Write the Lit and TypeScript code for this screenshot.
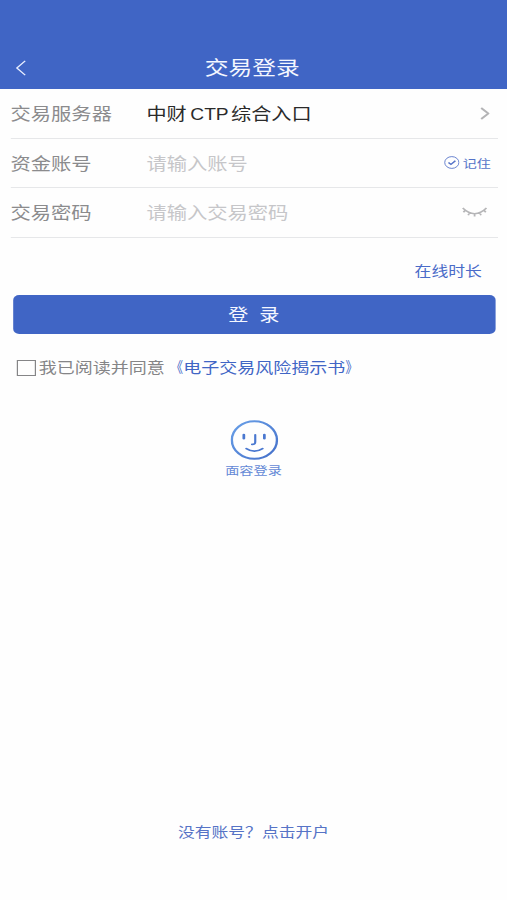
import { LitElement, html, css, svg, nothing } from "lit";
import { customElement } from "lit/decorators.js";

const chevron = svg`<path d="M1 1 L7 6.5 L1 12" fill="none" stroke="#b4b4b6" stroke-width="1.7"/>`;

@customElement("app-root")
export class AppRoot extends LitElement {
  static styles = css`
    :host {
      display: block;
      width: 507px;
      height: 900px;
      overflow: hidden;
      background: #fefefe;
      font-family: "Noto Sans CJK SC", sans-serif;
    }
    svg {
      display: block;
      flex: none;
    }
    .page {
      width: 422.5px;
      height: 900px;
      display: flex;
      flex-direction: column;
      transform: scaleX(1.2);
      transform-origin: 0 0;
    }
    .header {
      height: 89px;
      box-sizing: border-box;
      padding: 46px 13px 0;
      background: #4065c5;
      color: #f4f7ff;
      display: grid;
      grid-template-columns: 20px 1fr 20px;
      align-items: center;
    }
    .title {
      text-align: center;
      font-size: 19.8px;
      line-height: 42px;
      padding: 0 2px 1px 0;
    }
    .form {
      margin: 0 7.5px 0 8.8px;
    }
    .row {
      height: 49.6px;
      box-sizing: border-box;
      border-bottom: 1.5px solid #e6e7e9;
      display: flex;
      align-items: center;
      font-size: 16.9px;
      line-height: 24px;
      white-space: nowrap;
    }
    .label {
      width: 113.2px;
      color: #8b8b8d;
    }
    .value {
      flex: 1;
      color: #2a2a2a;
      font-size: 16.8px;
      padding-top: 2px;
    }
    .latin {
      font-family: "Liberation Sans", sans-serif;
      font-size: 16px;
      margin: 0 2px 0 3px;
    }
    .hint {
      flex: 1;
      color: #c6c6c9;
    }
    .remember {
      display: flex;
      align-items: center;
      gap: 3px;
      margin-right: 6px;
      font-size: 11.7px;
      color: #5573c8;
    }
    .arrow {
      margin-right: 7px;
    }
    .eye {
      margin-right: 8.7px;
    }
    .duration {
      align-self: flex-end;
      margin: 21px 21px 0 0;
      font-size: 14px;
      line-height: 22px;
      color: #4a6bc8;
    }
    .login {
      margin: 14px 10px 0 10.5px;
      height: 39px;
      flex: none;
      border: 0;
      border-radius: 5px;
      padding: 0;
      background: #4065c5;
      color: #f4f7ff;
      font: 16.8px/39px "Noto Sans CJK SC", sans-serif;
      display: flex;
      justify-content: center;
      gap: 9.2px;
    }
    .agree {
      margin: 21px 0 0 14.4px;
      display: flex;
      align-items: center;
      font-size: 15px;
      line-height: 24px;
      color: #858587;
      white-space: nowrap;
    }
    .box {
      width: 16px;
      height: 16px;
      box-sizing: border-box;
      border: 1px solid #858587;
      margin-right: 2px;
      margin-top: 2px;
    }
    .link {
      display: flex;
      color: #4065c5;
      margin-left: 7.8px;
      font-feature-settings: "halt";
    }
    .mark {
      transform: scaleX(0.68);
      transform-origin: 100% 50%;
    }
    .mark.end {
      transform-origin: 0 50%;
    }
    .face {
      margin-top: 41px;
      padding-left: 0.6px;
      display: flex;
      flex-direction: column;
      align-items: center;
      font-size: 11.8px;
      line-height: 18px;
      color: #6489d6;
    }
    .face-text {
      margin: 1px 0.6px 0 0;
    }
    .open {
      margin: auto 0 58px;
      text-align: center;
      font-size: 14px;
      line-height: 22px;
      color: #5673c6;
    }
  `;

  private row(label: string, content: unknown, tail: unknown = nothing) {
    return html`<div class="row"><span class="label">${label}</span>${content}${tail}</div>`;
  }

  render() {
    return html`
      <div class="page">
        <div class="header">
          <svg width="10" height="16" viewBox="0 0 10 16">
            <path d="M8 0.8 L1 8 L8 15.2" fill="none" stroke="#e8eeff" stroke-width="1.2" />
          </svg>
          <span class="title">交易登录</span>
        </div>
        <div class="form">
          ${this.row(
            "交易服务器",
            html`<span class="value">中财<span class="latin">CTP</span>综合入口</span>`,
            html`<svg class="arrow" width="8" height="13" viewBox="0 0 8 13">${chevron}</svg>`
          )}
          ${this.row(
            "资金账号",
            html`<span class="hint">请输入账号</span>`,
            html`<span class="remember">
              <svg width="13" height="13" viewBox="0 0 13 13" fill="none" stroke="#5573c8">
                <circle cx="6.5" cy="6.5" r="5.9" stroke-width=".8" />
                <path d="M3.7 6.4 L5.8 8.4 L9.5 4.8" stroke-width="1.4" />
              </svg>
              记住
            </span>`
          )}
          ${this.row(
            "交易密码",
            html`<span class="hint">请输入交易密码</span>`,
            html`<svg class="eye" width="21" height="10" viewBox="0 0 21 10" fill="none" stroke="#b5b5b7" stroke-width="1.5">
              <path d="M.6 1 Q10.5 12.4 20.4 1 M2.8 3 L1.2 5.2 M6.3 5.5 L5.2 8.2 M10.5 6.5 V9.6 M14.7 5.5 L15.8 8.2 M18.2 3 L19.8 5.2" />
            </svg>`
          )}
        </div>
        <div class="duration">在线时长</div>
        <button class="login"><span>登</span><span>录</span></button>
        <div class="agree">
          <span class="box"></span><span>我已阅读并同意</span>
          <span class="link">
            <span class="mark">《</span><span>电子交易风险揭示书</span><span class="mark end">》</span>
          </span>
        </div>
        <div class="face">
          <svg width="40" height="40" viewBox="0 0 40 40" fill="none" stroke-linecap="round">
            <defs>
              <linearGradient id="ring" x1="0" y1="0" x2="1" y2="1">
                <stop offset="0" stop-color="#69a0e8" />
                <stop offset="1" stop-color="#446fc9" />
              </linearGradient>
            </defs>
            <circle cx="20" cy="20" r="18.8" stroke="url(#ring)" stroke-width="2" />
            <g stroke="#4a78d0" stroke-width="1.8">
              <path d="M11.2 14.8 V18.4 M28.3 14.8 V18.4" stroke-width="2.3" />
              <path d="M20.7 14.8 V22 Q20.7 24.6 18 24.4" />
              <path d="M13.3 28.6 Q20 33.8 26.8 28.6" />
            </g>
          </svg>
          <span class="face-text">面容登录</span>
        </div>
        <div class="open">没有账号？点击开户</div>
      </div>
    `;
  }
}
